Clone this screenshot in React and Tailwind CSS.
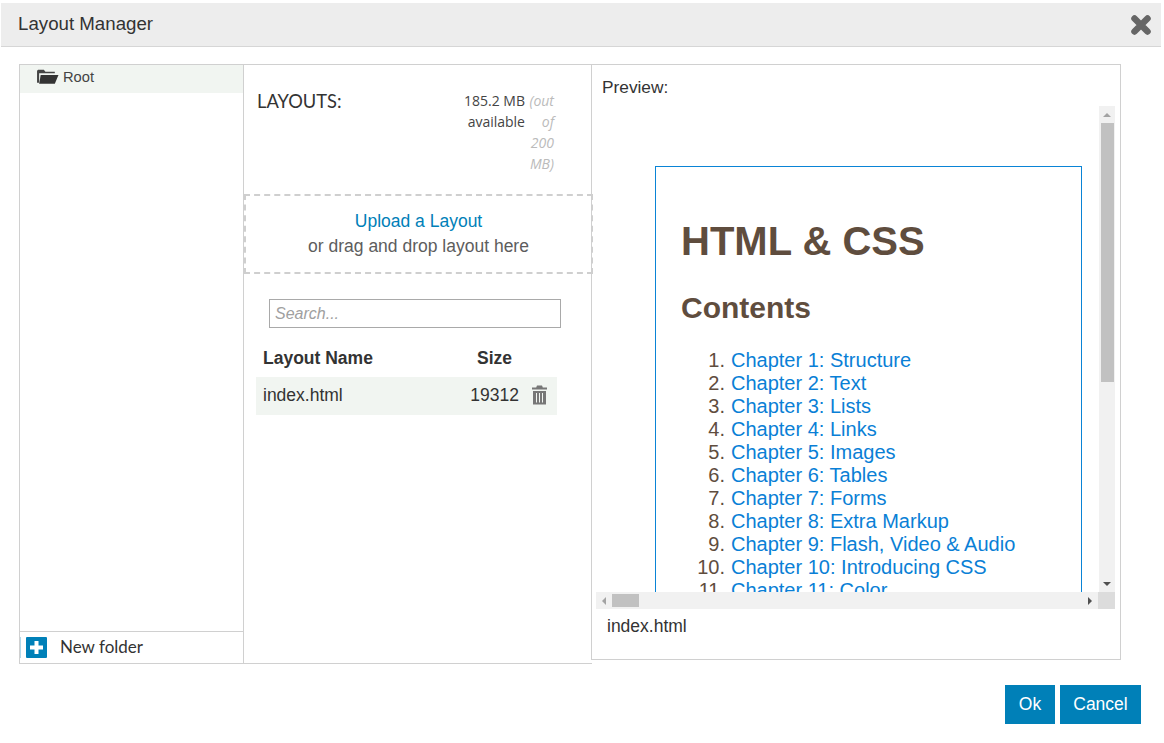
const chapters = [
    "Chapter 1: Structure",
    "Chapter 2: Text",
    "Chapter 3: Lists",
    "Chapter 4: Links",
    "Chapter 5: Images",
    "Chapter 6: Tables",
    "Chapter 7: Forms",
    "Chapter 8: Extra Markup",
    "Chapter 9: Flash, Video & Audio",
    "Chapter 10: Introducing CSS",
    "Chapter 11: Color",
];

function FolderOpen() {
    return (
        <svg width="23" height="17" viewBox="0 0 22 16" className="block">
            <path d="M1 2.5 L1 14 L3 14 L3 5 L18 5 L18 3.5 L9 3.5 L7.5 1.5 L2 1.5 Z" fill="#444" />
            <path d="M4.5 6.5 L21.5 6.5 L18 15 L3 15 Z" fill="#333" />
        </svg>
    );
}

function Arrow({ dir }) {
    const points = {
        up: "0,6 4,2 8,6",
        down: "0,2 8,2 4,6",
        left: "6,0 6,8 2,4",
        right: "2,0 2,8 6,4",
    };
    return (
        <svg width="8" height="8" viewBox="0 0 8 8" className="block">
            <polygon points={points[dir]} fill={dir === "up" || dir === "left" ? "#a3a3a3" : "#505050"} />
        </svg>
    );
}

function CloseIcon() {
    return (
        <svg width="22" height="22" viewBox="0 0 22 22" className="block">
            <path d="M4.5 4.5 L17.5 17.5 M17.5 4.5 L4.5 17.5" stroke="#666" strokeWidth="6.5" strokeLinecap="round" />
        </svg>
    );
}

function PlusIcon() {
    return (
        <svg width="21" height="21" viewBox="0 0 21 21" className="block">
            <rect width="21" height="21" rx="1" fill="#0080b8" />
            <path d="M10.5 4 V17 M4 10.5 H17" stroke="#fff" strokeWidth="4" />
        </svg>
    );
}

function TrashIcon() {
    return (
        <svg width="17" height="20" viewBox="0 0 17 20" className="block">
            <path d="M6 0.5 H11 L11.8 2.5 H16 V4.5 H1 V2.5 H5.2 Z" fill="#777" />
            <path d="M2 6 H15 V19.5 H2 Z" fill="#777" />
            <path d="M5.5 8 V17.5 M8.5 8 V17.5 M11.5 8 V17.5" stroke="#f1f5f1" strokeWidth="1" />
        </svg>
    );
}

function PreviewPane() {
    return (
        <div className="relative ml-[4px] mt-[8px] h-[503px] w-[519px] overflow-hidden">
            <div className="h-[486px] w-[503px] overflow-hidden pl-[59px] pt-[60px]">
                <div className="h-[600px] w-[427px] border border-[#0a84d6] pl-[25px] pt-[51px] font-['Liberation_Sans',sans-serif] text-[#5f4d3e]">
                    <h1 className="text-[40px] leading-[46px] font-bold">HTML &amp; CSS</h1>
                    <h2 className="mt-[26px] text-[30px] leading-[35px] font-bold">Contents</h2>
                    <ol className="mt-[24px] text-[20px] leading-[23px]">
                        {chapters.map((c, i) => (
                            <li key={c} className="flex">
                                <span className="w-[50px] pr-[6px] text-right">{i + 1}.</span>
                                <span className="text-[#0a7fd6]">{c}</span>
                            </li>
                        ))}
                    </ol>
                </div>
            </div>
            {/* scrollbars */}
            <div className="absolute right-0 top-0 flex h-[486px] w-[16px] flex-col items-center bg-[#f1f1f1]">
                <div className="flex h-[17px] items-center"><Arrow dir="up" /></div>
                <div className="h-[259px] w-[13px] bg-[#c1c1c1]" />
                <div className="mt-auto flex h-[17px] items-center"><Arrow dir="down" /></div>
            </div>
            <div className="absolute bottom-0 left-0 flex h-[17px] w-[519px] items-center bg-[#f1f1f1]">
                <div className="flex w-[16px] justify-center"><Arrow dir="left" /></div>
                <div className="h-[13px] w-[27px] bg-[#c1c1c1]" />
                <div className="ml-auto flex w-[16px] justify-center"><Arrow dir="right" /></div>
                <div className="h-[17px] w-[17px] bg-[#dcdcdc]" />
            </div>
        </div>
    );
}

export default function App() {
    return (
        <div className="h-[743px] w-[1164px] overflow-hidden bg-white pt-[3px] font-['Liberation_Sans',sans-serif]">
            <header className="ml-[1px] flex h-[44px] w-[1160px] items-center justify-between border-b border-[#d6d6d6] bg-[#ededed] pl-[17px] pr-[9px]">
                <span className="text-[18.7px] text-[#333]">Layout Manager</span>
                <CloseIcon />
            </header>

            <div className="ml-[19px] mt-[17px] flex items-start">
                <aside className="flex h-[600px] w-[225px] flex-col border border-[#d0d0d0]">
                    <div className="flex h-[28px] items-start bg-[#f1f5f1] pl-[16px] pt-[3px] text-[14.7px] leading-[18px] text-[#444]">
                        <FolderOpen />
                        <span className="ml-[4px]">Root</span>
                    </div>
                    <div className="mt-auto flex h-[32px] items-center border-t border-[#d0d0d0]">
                        <span className="h-[21px] w-[1px] bg-[#b5d9ea]" />
                        <span className="ml-[5px]"><PlusIcon /></span>
                        <span className="ml-[13px] pb-[2px] font-['Lato',sans-serif] text-[17px] text-[#333]">New folder</span>
                    </div>
                </aside>

                <section className="h-[600px] w-[348px] border-y border-[#d0d0d0]">
                    <div className="flex h-[129px] pl-[13px] pr-[38px] pt-[25px]">
                        <span className="pt-[1px] font-['Lato',sans-serif] text-[18.3px] leading-[21px] text-[#333]">LAYOUTS:</span>
                        <div className="ml-auto flex text-right text-[14px] leading-[21px]">
                            <span className="w-[71px] font-['Open_Sans',sans-serif] text-[#444]">185.2 MB available</span>
                            <span className="ml-[2px] w-[27px] font-['Open_Sans',sans-serif] italic text-[#bbb]">(out of 200 MB)</span>
                        </div>
                    </div>
                    <div className="relative z-10 flex h-[80px] w-[349px] flex-col items-center justify-center border-2 border-dashed border-[#cfcfcf] text-[17.5px] leading-[25px]">
                        <span className="text-[#0080b8]">Upload a Layout</span>
                        <span className="text-[#5d5d5d]">or drag and drop layout here</span>
                    </div>
                    <div className="ml-[25px] mt-[25px] flex h-[29px] w-[292px] items-center border border-[#a9a9a9] pl-[5px] text-[16px] italic text-[#a0a0a0]">
                        Search...
                    </div>
                    <div className="ml-[12px] mt-[13px] flex h-[35px] w-[301px] items-center pl-[7px] text-[17.5px] font-bold text-[#333]">
                        <span className="w-[214px]">Layout Name</span>
                        <span>Size</span>
                    </div>
                    <div className="ml-[12px] mt-[1px] flex h-[38px] w-[301px] items-center bg-[#f1f5f1] pb-[2px] pl-[7px] text-[17.5px] text-[#333]">
                        <span>index.html</span>
                        <span className="ml-auto">19312</span>
                        <span className="ml-[12px] mr-[9px] mb-[1px]"><TrashIcon /></span>
                    </div>
                </section>

                <section className="-ml-[1px] h-[596px] w-[530px] border border-[#d0d0d0]">
                    <div className="pl-[10px] pt-[11px] text-[17.3px] leading-[22px] text-[#333]">Preview:</div>
                    <PreviewPane />
                    <div className="pl-[15px] pt-[7px] text-[17.5px] leading-[20px] text-[#333]">index.html</div>
                </section>
            </div>

            <div className="mr-[23px] mt-[21px] flex justify-end gap-[5px] text-[17.5px] text-white">
                <button className="h-[39px] w-[50px] bg-[#0080b8]">Ok</button>
                <button className="h-[39px] w-[81px] bg-[#0080b8]">Cancel</button>
            </div>
        </div>
    );
}
